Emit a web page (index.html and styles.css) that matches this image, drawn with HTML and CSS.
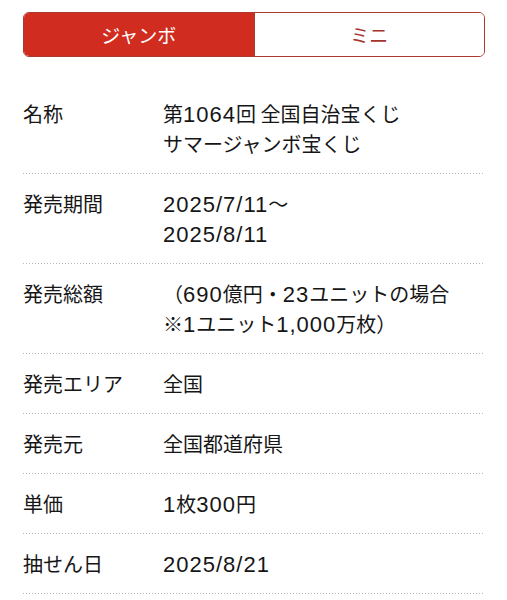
FILE: index.html
```html
<!DOCTYPE html>
<html lang="ja">
<head>
<meta charset="utf-8">
<link rel="stylesheet" href="styles.css">
</head>
<body>
<div class="page">
  <div class="tabs">
    <div class="tab active">ジャンボ</div>
    <div class="tab">ミニ</div>
  </div>
  <dl class="info">
    <div class="row"><dt>名称</dt><dd>第<span class="num">1064</span>回 全国自治宝くじ<br>サマージャンボ宝くじ</dd></div>
    <div class="row"><dt>発売期間</dt><dd><span class="num">2025/7/11</span>～<br><span class="num">2025/8/11</span></dd></div>
    <div class="row"><dt>発売総額</dt><dd>（<span class="num">690</span>億円・<span class="num">23</span>ユニットの場合<br>※<span class="num">1</span>ユニット<span class="num">1,000</span>万枚）</dd></div>
    <div class="row"><dt>発売エリア</dt><dd>全国</dd></div>
    <div class="row"><dt>発売元</dt><dd>全国都道府県</dd></div>
    <div class="row"><dt>単価</dt><dd><span class="num">1</span>枚<span class="num">300</span>円</dd></div>
    <div class="row"><dt>抽せん日</dt><dd><span class="num">2025/8/21</span></dd></div>
  </dl>
</div>
</body>
</html>
```

FILE: styles.css
```css
* { box-sizing: border-box; }
html, body { margin: 0; padding: 0; background: #fff; }
body {
  font-family: "Noto Sans CJK JP", "Noto Sans", sans-serif;
  color: #161616;
}
.page {
  padding: 12px 22px 0 23px;
}
.tabs {
  display: flex;
  height: 45px;
  border: 1.5px solid #a83a30;
  border-radius: 6px;
  overflow: hidden;
}
.tab {
  flex: 1;
  display: flex;
  align-items: center;
  justify-content: center;
  font-size: 19px;
  color: #a3342b;
  background: #fff;
}
.tab.active {
  background: #d12c20;
  color: #fff;
  border-right: 1.5px solid #a83a30;
}
.info {
  margin: 27px 0 0;
}
.row {
  display: flex;
  padding: 15px 0;
  font-size: 20px;
  line-height: 30px;
  background-image: linear-gradient(to right, #b8b8b8 1px, transparent 1px);
  background-size: 3px 1px;
  background-repeat: repeat-x;
  background-position: left bottom;
}
.row dt {
  width: 140px;
  flex: none;
}
.row dd {
  margin: 0;
}
.num {
  font-family: "Liberation Sans", Arial, sans-serif;
  font-size: 22px;
  line-height: 1;
  letter-spacing: 1px;
}
```
